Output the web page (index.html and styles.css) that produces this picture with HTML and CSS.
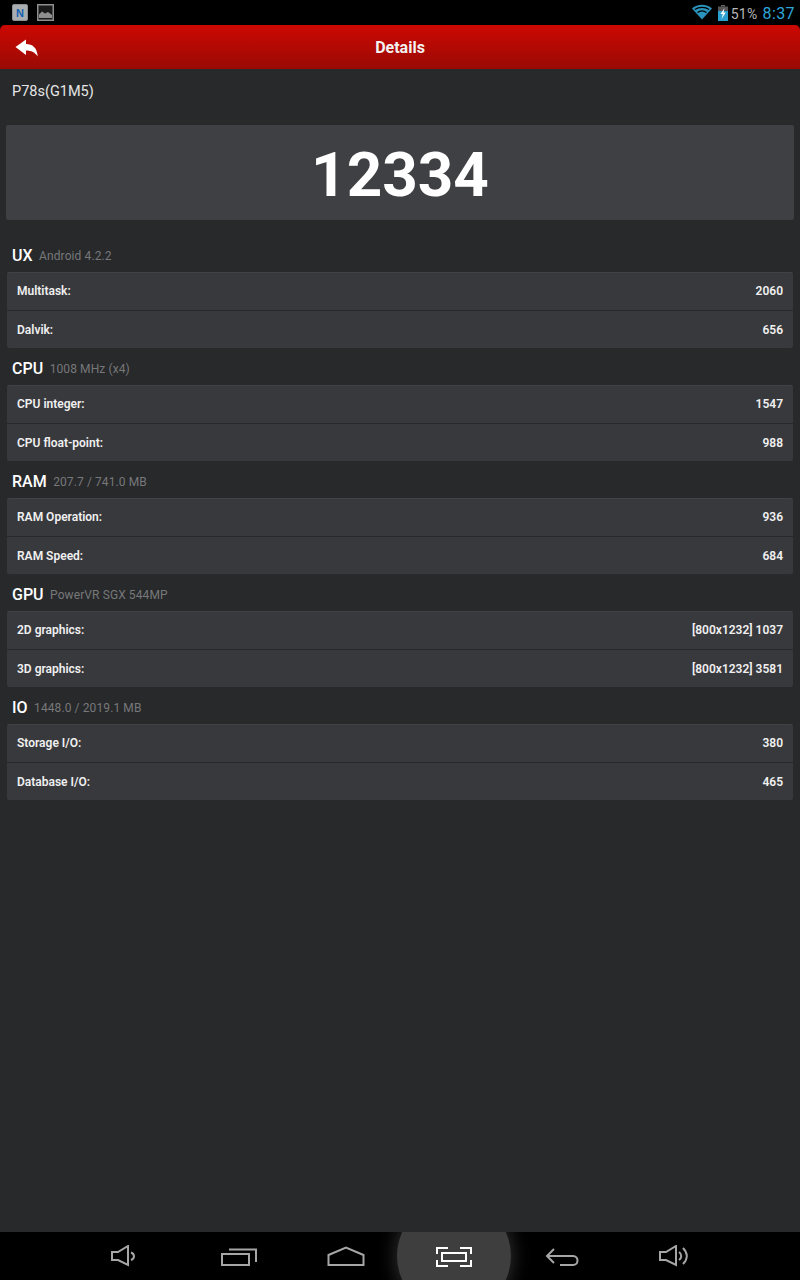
FILE: index.html
```html
<!DOCTYPE html>
<html>
<head>
<meta charset="utf-8">
<title>Details</title>
<link rel="stylesheet" href="styles.css">
</head>
<body>
<div class="screen">
  <div class="status">
    <div class="notif">
      <svg class="ic" width="16" height="17" viewBox="0 0 16 17"><rect x="0.5" y="0.5" width="15" height="16" rx="1.5" fill="#a9adb0" stroke="#8b8f92"/><text x="8" y="13" class="n-glyph">N</text></svg>
      <svg class="ic" width="17" height="17" viewBox="0 0 17 17"><rect x="0.75" y="0.75" width="15.5" height="15.500" fill="#1a1a1a" stroke="#8e8e8e" stroke-width="1.5"/><path d="M2 14V10.500L5 7.500L8 9.500L11 8L15 11V14Z" fill="#8e8e8e"/></svg>
    </div>
    <div class="sys">
      <svg class="wifi" width="20" height="16" viewBox="0 0 20 16"><path d="M10 15.500L0 4.500C5.500 -0.500 14.500 -0.500 20 4.500Z" fill="#2a93bb"/><path d="M2.900 5.600C6.700 2.700 13.300 2.700 17.100 5.600M5.500 8.500C8.100 6.600 11.900 6.600 14.500 8.500" fill="none" stroke="#000" stroke-width="1.200"/></svg>
      <svg class="batt" width="10" height="16" viewBox="0 0 10 16"><rect x="3" y="0" width="4" height="1.500" fill="#666"/><rect x="0" y="1.500" width="10" height="14.500" fill="#555"/><rect x="0" y="6" width="10" height="10" fill="#2a9fd0"/><path d="M6.500 3L2.500 9H4.800L3.500 14L7.800 7.500H5.500Z" fill="#fff"/></svg>
      <span class="pct">51%</span>
      <span class="clock">8:37</span>
    </div>
  </div>
  <header class="bar">
    <svg class="back" width="24" height="18" viewBox="0 0 24 18"><path d="M0.500 8L11 0.500V5C17.500 5 22 8.500 22.800 17.500C20 13.500 16.500 11.500 11 11.500V16Z" fill="#fff"/></svg>
    <h1 class="title">Details</h1>
  </header>
  <main class="content">
    <div class="device">P78s(G1M5)</div>
    <div class="score">12334</div>

    <section class="group">
      <div class="ghead"><span class="gname">UX</span><span class="gsub">Android 4.2.2</span></div>
      <div class="card">
        <div class="row"><span>Multitask:</span><span>2060</span></div>
        <div class="row"><span>Dalvik:</span><span>656</span></div>
      </div>
    </section>
    <section class="group">
      <div class="ghead"><span class="gname">CPU</span><span class="gsub">1008 MHz (x4)</span></div>
      <div class="card">
        <div class="row"><span>CPU integer:</span><span>1547</span></div>
        <div class="row"><span>CPU float-point:</span><span>988</span></div>
      </div>
    </section>
    <section class="group">
      <div class="ghead"><span class="gname">RAM</span><span class="gsub">207.7 / 741.0 MB</span></div>
      <div class="card">
        <div class="row"><span>RAM Operation:</span><span>936</span></div>
        <div class="row"><span>RAM Speed:</span><span>684</span></div>
      </div>
    </section>
    <section class="group">
      <div class="ghead"><span class="gname">GPU</span><span class="gsub">PowerVR SGX 544MP</span></div>
      <div class="card">
        <div class="row"><span>2D graphics:</span><span>[800x1232] 1037</span></div>
        <div class="row"><span>3D graphics:</span><span>[800x1232] 3581</span></div>
      </div>
    </section>
    <section class="group">
      <div class="ghead"><span class="gname">IO</span><span class="gsub">1448.0 / 2019.1 MB</span></div>
      <div class="card">
        <div class="row"><span>Storage I/O:</span><span>380</span></div>
        <div class="row"><span>Database I/O:</span><span>465</span></div>
      </div>
    </section>
  </main>
  <nav class="nav">
    <svg class="nv n1" width="26" height="22" viewBox="0 0 26 22"><path d="M2 7H8L18 1V20L8 15H2Z" fill="none" stroke="#a6a6a6" stroke-width="2"/><path d="M21 7.500C25 9 25 13.500 21 15" fill="none" stroke="#a6a6a6" stroke-width="2"/></svg>
    <svg class="nv n2" width="36" height="20" viewBox="0 0 36 20"><path d="M1 8H28V19H1Z" fill="none" stroke="#a6a6a6" stroke-width="2"/><path d="M8 3.500H35V16" fill="none" stroke="#a6a6a6" stroke-width="2"/></svg>
    <svg class="nv n3" width="38" height="20" viewBox="0 0 38 20"><path d="M1.500 19V9L19 1.500L36.500 9V19Z" fill="none" stroke="#a6a6a6" stroke-width="2"/></svg>
    <div class="shot-slot">
      <div class="shot"></div>
      <svg class="shot-ic" width="36" height="20" viewBox="0 0 36 20"><path d="M1 7V1H12M24 1H35V7M1 13V19H12M24 19H35V13" fill="none" stroke="#fff" stroke-width="2"/><rect x="6" y="6" width="24" height="8" fill="none" stroke="#fff" stroke-width="2"/></svg>
    </div>
    <svg class="nv n5" width="34" height="20" viewBox="0 0 34 20"><path d="M9 3L2 10L9 17M2 10H28C34 10 34 19 28 19H15" fill="none" stroke="#a6a6a6" stroke-width="2"/></svg>
    <svg class="nv n6" width="30" height="22" viewBox="0 0 30 22"><path d="M1 7H7L17 1V20L7 15H1Z" fill="none" stroke="#a6a6a6" stroke-width="2"/><path d="M20 7C23 9 23 13 20 15M24 3C29 8 29 14 24 19" fill="none" stroke="#a6a6a6" stroke-width="2"/></svg>
  </nav>
</div>
</body>
</html>
```

FILE: styles.css
```css
* { box-sizing: border-box; }
html, body { margin: 0; padding: 0; background: #28292b; }
.screen {
  width: 800px;
  height: 1280px;
  display: flex;
  flex-direction: column;
  overflow: hidden;
  font-family: Roboto, "Liberation Sans", sans-serif;
  background: #000;
}
.status {
  height: 25px;
  background: #000;
  display: flex;
  justify-content: space-between;
  align-items: flex-start;
  padding: 4px 5px 0 12px;
}
.notif { display: flex; gap: 9px; }
.ic { display: block; }
.n-glyph { font: 700 11px "Liberation Sans", sans-serif; fill: #1460b0; text-anchor: middle; }
.sys { display: flex; align-items: center; height: 17px; margin-top: 1px; }
.wifi { margin-top: -3px; }
.batt { margin-left: 6px; margin-top: -1px; }
.pct { font-size: 14px; color: #b5b5b5; margin-left: 3px; letter-spacing: 0.3px; }
.clock { font-size: 16px; color: #2ea6d9; margin-left: 5px; letter-spacing: 0.4px; }
.bar {
  height: 44px;
  background: linear-gradient(#cc0803, #9a0a04);
  border-radius: 5px 5px 0 0;
  display: flex;
  align-items: center;
  justify-content: center;
  position: relative;
}
.back { position: absolute; left: 15px; top: 14px; }
.title { margin: 0; font-size: 16px; font-weight: 700; color: #f2f2f2; }
.content {
  flex: 1;
  background: #28292b;
  padding: 0 6px;
}
.device {
  height: 56px;
  padding: 13px 6px 0;
  font-size: 14.5px;
  line-height: 20px;
  color: #e6e6e6;
}
.score {
  height: 95px;
  background: #3f4043;
  border-radius: 2px;
  color: #fff;
  font-size: 62px;
  font-weight: 700;
  line-height: 100px;
  text-align: center;
}
.group { padding: 0 1px; }
.ghead {
  height: 37px;
  display: flex;
  align-items: center;
  padding: 4px 5px 0;
}
.group:first-of-type .ghead { height: 52px; padding-top: 19px; }
.gname { font-size: 16px; font-weight: 500; color: #fff; line-height: 20px; }
.gsub { font-size: 12px; color: #77787a; margin-left: 6.5px; letter-spacing: 0.1px; line-height: 20px; }
.card {
  background: #38393d;
  border-radius: 2px;
  border-top: 1px solid #414245;
}
.row {
  height: 37px;
  display: flex;
  justify-content: space-between;
  align-items: center;
  padding: 0 10px 1px;
  font-size: 12px;
  font-weight: 600;
  color: #f0f0f0;
}
.row + .row { border-top: 1px solid #28292b; height: 38px; padding-bottom: 0; }
.nav {
  height: 48px;
  background: #000;
  display: flex;
  align-items: center;
  padding-left: 110px;
  overflow: hidden;
}
.nv { display: block; flex: none; }
.n2 { margin-left: 85px; }
.n3 { margin-left: 70px; }
.n5 { margin-left: 73px; }
.n6 { margin-left: 80px; }
.shot-slot {
  width: 36px;
  height: 20px;
  margin-left: 71px;
  position: relative;
  flex: none;
}
.shot {
  position: absolute;
  left: -39px;
  top: -47px;
  width: 114px;
  height: 114px;
  border-radius: 50%;
  background: #3e3e3e;
  box-shadow: 0 0 18px 2px rgba(90,90,90,.5);
}
.shot-ic { position: absolute; left: 0; top: 1px; display: block; }
```
